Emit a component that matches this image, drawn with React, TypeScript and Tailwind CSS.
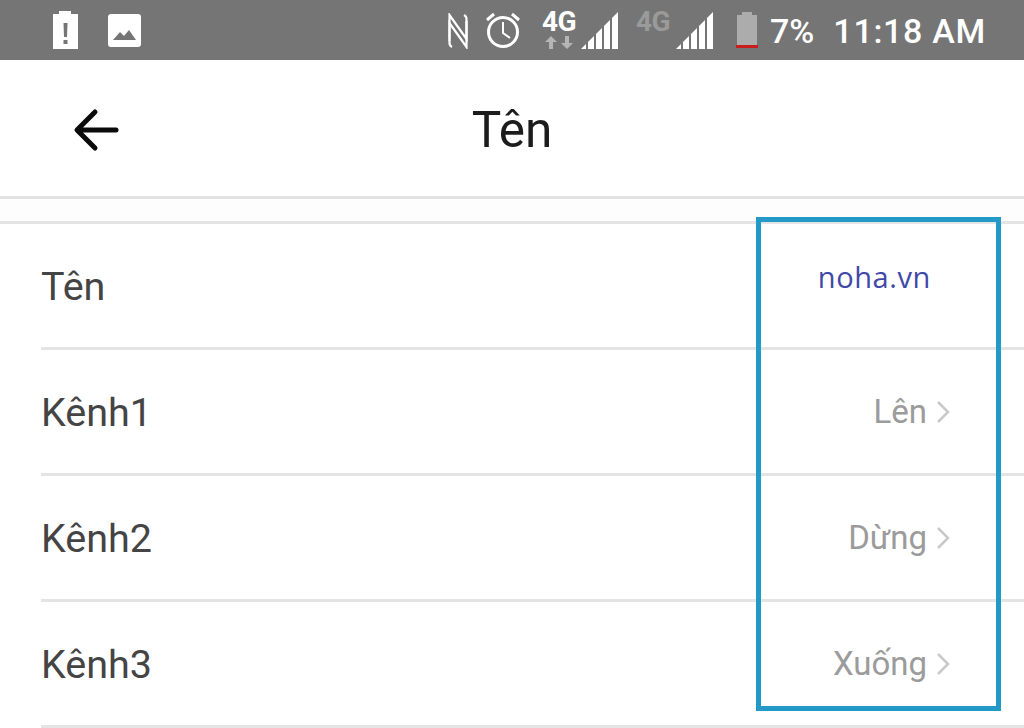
const ROBOTO = "font-['Roboto',sans-serif]";

const ROWS = [
  { label: "Tên", value: "noha.vn", link: true },
  { label: "Kênh1", value: "Lên" },
  { label: "Kênh2", value: "Dừng" },
  { label: "Kênh3", value: "Xuống" },
];

function SignalBars() {
  return (
    <svg width="38" height="38" viewBox="0 0 38 38" fill="#fff">
      <path d="M0 37 L5 32 V37 Z" />
      <path d="M7 37 V30 L13 24 V37 Z" />
      <path d="M15 37 V22 L21 16 V37 Z" />
      <path d="M23 37 V14 L29 8 V37 Z" />
      <path d="M31 37 V6 L37 0 V37 Z" />
    </svg>
  );
}

function StatusBar() {
  return (
    <div className={`flex h-[60px] items-center bg-[#757575] text-white ${ROBOTO}`}>
      {/* Notification icons */}
      <svg width="27" height="40" viewBox="0 0 27 40" className="ml-[52px]">
        <path
          fill="#fff"
          fillRule="evenodd"
          d="M7 1 H19 V4 H26 V39 H1 V4 H7 Z M11.5 13 H15.5 L15 27 H12 Z M11.5 30 H15.5 V34 H11.5 Z"
        />
      </svg>
      <svg width="33" height="33" viewBox="0 0 33 33" className="ml-[29px] mt-[1px]">
        <path
          fill="#fff"
          fillRule="evenodd"
          d="M3 0 H30 A3 3 0 0 1 33 3 V30 A3 3 0 0 1 30 33 H3 A3 3 0 0 1 0 30 V3 A3 3 0 0 1 3 0 Z M5 26 H28 L21 16 L16 22 L12 18 Z"
        />
      </svg>

      {/* System icons */}
      <svg width="20" height="36" viewBox="0 0 20 36" fill="none" stroke="#fff" strokeWidth="2.2" className="ml-[307px] mt-[2px]">
        <path d="M4 34 C2 33 1.5 32 1.5 30 V2 L18.5 26 V8" />
        <path d="M16 2 C18 3 18.5 4 18.5 6 V34 L1.5 10 V28" />
      </svg>
      <svg width="36" height="38" viewBox="0 0 36 38" fill="none" stroke="#fff" strokeWidth="3" className="ml-[17px]">
        <circle cx="18" cy="21" r="14.5" />
        <path d="M18 11 V22 L25 27" strokeWidth="2" />
        <path d="M2 9 L9 3 M34 9 L27 3" strokeWidth="3" />
      </svg>
      <div className="ml-[22px] flex w-[32px] flex-col items-center">
        <span className="text-[28px] font-bold leading-[22px] tracking-[-0.5px]">4G</span>
        <svg width="30" height="15" viewBox="0 0 30 15" fill="#b5b5b5" className="mt-[2px]">
          <path d="M7 1 L13 7 H9 V14 H5 V7 H1 Z" />
          <path d="M23 14 L29 8 H25 V1 H21 V8 H17 Z" />
        </svg>
      </div>
      <div className="ml-[6px] mt-[1px]">
        <SignalBars />
      </div>
      <span className="ml-[17px] mb-[17px] w-[32px] text-[28px] font-bold leading-[22px] tracking-[-0.5px] text-[#9a9a9a]">
        4G
      </span>
      <div className="ml-[8px] mt-[1px]">
        <SignalBars />
      </div>
      <svg width="22" height="38" viewBox="0 0 22 38" className="ml-[22px] mt-[1px]">
        <path fill="#acacac" d="M6 0 H16 V3 H21 V33 H1 V3 H6 Z" />
        <rect x="0" y="33" width="22" height="3" fill="#c81e1e" />
      </svg>
      <span className="ml-[12px] mt-[2px] text-[34px] font-medium leading-none">7%</span>
      <span className="ml-[19px] mt-[2px] whitespace-nowrap text-[34px] font-medium leading-none tracking-[0.7px]">
        11:18 AM
      </span>
    </div>
  );
}

function Row({ label, value, link }: { label: string; value: string; link?: boolean }) {
  return (
    <div className="ml-[41px] flex h-[126px] items-center justify-between border-b-[3px] border-[#e4e4e4]">
      <span className="mt-[2px] text-[39.5px] leading-none text-[#444444]">{label}</span>
      {link ? (
        <span className="mb-[18px] mr-[93px] font-['Open_Sans',sans-serif] text-[29px] leading-none tracking-[0.6px] text-[#3f48a8]">
          {value}
        </span>
      ) : (
        <div className="mr-[74px] flex items-center gap-[9px]">
          <span className="text-[33px] leading-none text-[#9b9b9b]">{value}</span>
          <svg width="14" height="24" viewBox="0 0 14 24" fill="none" stroke="#c9c9c9" strokeWidth="2.5">
            <path d="M2 2 L12 12 L2 22" />
          </svg>
        </div>
      )}
    </div>
  );
}

export default function App() {
  return (
    <div className={`relative h-[728px] w-[1024px] overflow-hidden bg-white ${ROBOTO}`}>
      <StatusBar />

      {/* Header */}
      <div className="relative flex h-[139px] items-center justify-center border-b-[3px] border-[#e2e2e2]">
        <svg
          width="48"
          height="44"
          viewBox="0 0 48 44"
          fill="none"
          stroke="#0a0a0a"
          strokeWidth="5"
          strokeLinecap="round"
          strokeLinejoin="round"
          className="absolute left-[72px] top-[48px]"
        >
          <path d="M44 22 H6 M23 4 L5 22 L23 40" />
        </svg>
        <span className="mt-[6px] text-[49.5px] leading-none text-[#1c1c1c]">Tên</span>
      </div>

      <div className="h-[25px] border-b-[3px] border-[#e4e4e4] bg-[#fdfdfd]" />

      {ROWS.map((row) => (
        <Row key={row.label} {...row} />
      ))}

      {/* Highlight box drawn on the screenshot */}
      <div className="pointer-events-none absolute left-[756px] top-[217px] h-[494px] w-[245px] border-[5px] border-[#2299c6]" />
    </div>
  );
}
